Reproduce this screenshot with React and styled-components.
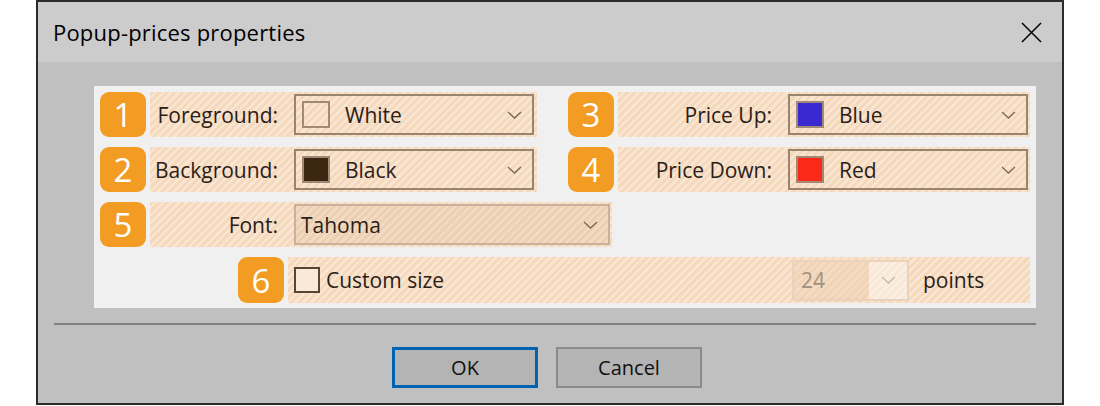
import React from 'react';
import styled, { createGlobalStyle, css } from 'styled-components';

const GlobalStyle = createGlobalStyle`
  html, body {
    margin: 0;
    padding: 0;
    background: #ffffff;
  }
  body {
    font-family: "Open Sans", "Noto Sans", sans-serif;
    color: #1a1a1a;
  }
`;

const hatch = css`
  background: repeating-linear-gradient(
    135deg,
    #f5d9bc 0 3px,
    #f9e5d1 3px 5.5px
  );
`;

const Page = styled.div`
  width: 1100px;
  height: 406px;
  background: #ffffff;
  padding-left: 36px;
  box-sizing: border-box;
`;

const Window = styled.div`
  width: 1028px;
  height: 405px;
  box-sizing: border-box;
  border: 2px solid #2b2b2b;
  background: #c0c0c0;
  display: flex;
  flex-direction: column;
`;

const TitleBar = styled.div`
  height: 60px;
  flex-shrink: 0;
  background: #cccccc;
  display: flex;
  align-items: center;
  justify-content: space-between;
  padding: 0 20px 0 15px;
`;

const Title = styled.span`
  font-size: 22px;
  color: #000;
  letter-spacing: 0.2px;
`;

const CloseButton = styled.button`
  width: 22px;
  height: 22px;
  padding: 0;
  border: none;
  background: transparent;
  display: flex;
  align-items: center;
  justify-content: center;
`;

const Body = styled.div`
  flex: 1;
  display: flex;
  flex-direction: column;
  padding: 24px 26px 0 56px;
`;

const Panel = styled.div`
  background: #f0f0f0;
  padding: 6px 6px 5px 6px;
  display: flex;
  flex-direction: column;
  gap: 10px;
`;

const Row = styled.div`
  display: grid;
  grid-template-columns: ${p => p.$cols || '437px 1fr'};
  column-gap: 31px;
  height: ${p => p.$h || 45}px;
  padding-left: ${p => p.$indent || 0}px;
`;

const Group = styled.div`
  display: flex;
  gap: 4px;
`;

const Badge = styled.div`
  width: 46px;
  flex-shrink: 0;
  border-radius: 9px;
  background: #f39c24;
  color: #ffffff;
  font-size: 33px;
  font-weight: 500;
  display: flex;
  align-items: center;
  justify-content: center;
  line-height: 1;
`;

const Field = styled.div`
  flex: 1;
  display: flex;
  align-items: center;
  padding-right: ${p => p.$pr ?? 3}px;
  ${hatch}
`;

const Label = styled.span`
  width: ${p => p.$w}px;
  flex-shrink: 0;
  box-sizing: border-box;
  text-align: right;
  padding-right: 16px;
  font-size: 21px;
  color: #2a2018;
  white-space: nowrap;
`;

const Combo = styled.div`
  width: ${p => p.$w}px;
  height: 41px;
  box-sizing: border-box;
  border: 2px solid ${p => (p.$muted ? '#c8b09a' : '#9a8470')};
  display: flex;
  align-items: center;
  padding-left: ${p => p.$pl ?? 6}px;
  padding-right: 10px;
  gap: 15px;
  font-size: 21px;
  color: #2a2018;
  ${p =>
    p.$muted &&
    css`
      background: rgba(170, 120, 70, 0.09);
    `}
`;

const ComboText = styled.span`
  flex: 1;
  white-space: nowrap;
`;

const Swatch = styled.span`
  width: 28px;
  height: 27px;
  box-sizing: border-box;
  border: 2px solid #a08a76;
  background: ${p => p.$color};
  flex-shrink: 0;
`;

const Checkbox = styled.span`
  width: 26px;
  height: 26px;
  box-sizing: border-box;
  border: 2px solid #5a4535;
  background: #fbe9d8;
  margin: 0 6px 0 6px;
  flex-shrink: 0;
`;

const CheckText = styled.span`
  flex: 1;
  font-size: 21px;
  color: #2a2018;
`;

const Spinner = styled.div`
  width: 117px;
  height: 41px;
  box-sizing: border-box;
  border: 2px solid #ead3bd;
  display: flex;
  align-items: stretch;
`;

const SpinValue = styled.span`
  flex: 1;
  display: flex;
  align-items: center;
  padding-left: 7px;
  font-size: 21px;
  color: #a09080;
  background: rgba(230, 195, 160, 0.25);
`;

const SpinButton = styled.span`
  width: 38px;
  display: flex;
  align-items: center;
  justify-content: center;
  background: rgba(255, 255, 255, 0.4);
`;

const Unit = styled.span`
  width: 121px;
  padding-left: 14px;
  box-sizing: border-box;
  font-size: 21px;
  color: #2a2018;
`;

const Separator = styled.div`
  margin: 15px 0 0 -40px;
  height: 2px;
  background: #7f7f7f;
`;

const Buttons = styled.div`
  display: flex;
  justify-content: center;
  gap: 18px;
  margin: 22px 0 0 -36px;
`;

const Button = styled.button`
  width: 146px;
  height: 41px;
  box-sizing: border-box;
  background: #b4b4b4;
  border: ${p => (p.$primary ? '3px solid #0063b1' : '2px solid #8a8a8a')};
  font-family: inherit;
  font-size: 20px;
  color: #111;
  padding: 0;
`;

const Chevron = ({ color = '#7a6856' }) => (
  <svg width="15" height="8" viewBox="0 0 15 8">
    <path d="M1 1 L7.5 7 L14 1" fill="none" stroke={color} strokeWidth="1.3" />
  </svg>
);

const CloseIcon = () => (
  <svg width="21" height="21" viewBox="0 0 21 21">
    <path d="M1 1 L20 20 M20 1 L1 20" stroke="#000" strokeWidth="1.5" fill="none" />
  </svg>
);

const ColorRow = ({ num, label, labelWidth, swatch, value, pr }) => (
  <Group>
    <Badge>{num}</Badge>
    <Field $pr={pr}>
      <Label $w={labelWidth}>{label}</Label>
      <Combo $w={240}>
        <Swatch $color={swatch} />
        <ComboText>{value}</ComboText>
        <Chevron />
      </Combo>
    </Field>
  </Group>
);

export default function App() {
  return (
    <Page>
      <GlobalStyle />
      <Window>
        <TitleBar>
          <Title>Popup-prices properties</Title>
          <CloseButton aria-label="Close">
            <CloseIcon />
          </CloseButton>
        </TitleBar>
        <Body>
          <Panel>
            <Row>
              <ColorRow num="1" label="Foreground:" labelWidth={144} swatch="transparent" value="White" />
              <ColorRow num="3" label="Price Up:" labelWidth={170} swatch="#3a28d0" value="Blue" pr={2} />
            </Row>
            <Row>
              <ColorRow num="2" label="Background:" labelWidth={144} swatch="#3c2812" value="Black" />
              <ColorRow num="4" label="Price Down:" labelWidth={170} swatch="#fb2a18" value="Red" pr={2} />
            </Row>
            <Row $cols="512px">
              <Group>
                <Badge>5</Badge>
                <Field $pr={2}>
                  <Label $w={144}>Font:</Label>
                  <Combo $w={316} $muted $pl={5}>
                    <ComboText>Tahoma</ComboText>
                    <Chevron />
                  </Combo>
                </Field>
              </Group>
            </Row>
            <Row $cols="1fr" $indent={138} $h={46}>
              <Group>
                <Badge>6</Badge>
                <Field $pr={0}>
                  <Checkbox />
                  <CheckText>Custom size</CheckText>
                  <Spinner>
                    <SpinValue>24</SpinValue>
                    <SpinButton>
                      <Chevron color="#cdb8a4" />
                    </SpinButton>
                  </Spinner>
                  <Unit>points</Unit>
                </Field>
              </Group>
            </Row>
          </Panel>
          <Separator />
          <Buttons>
            <Button $primary>OK</Button>
            <Button>Cancel</Button>
          </Buttons>
        </Body>
      </Window>
    </Page>
  );
}
